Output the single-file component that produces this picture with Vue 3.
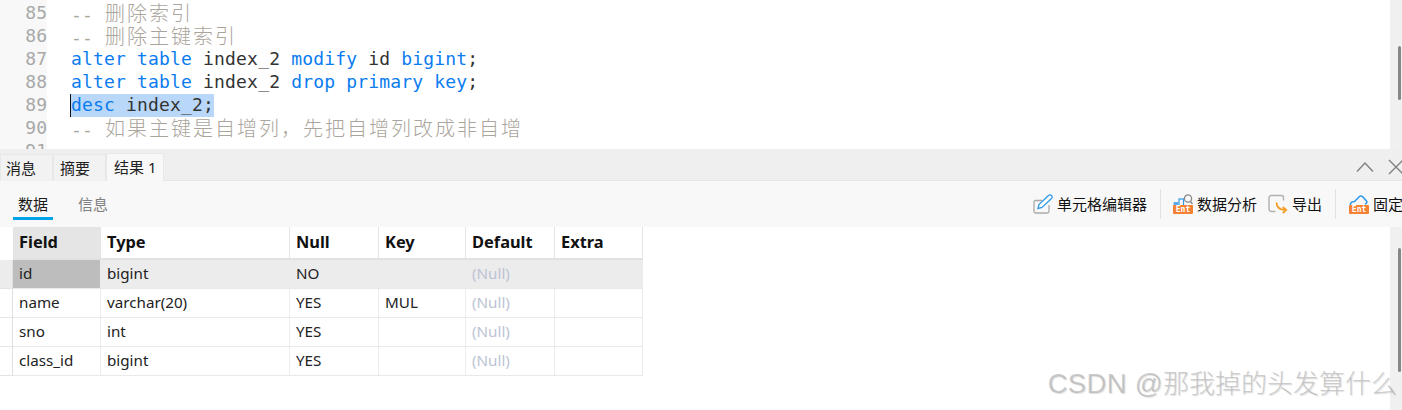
<script setup>
const lines = [
  { n: 85, parts: [['c', '-- '], ['z', '删除索引']] },
  { n: 86, parts: [['c', '-- '], ['z', '删除主键索引']] },
  { n: 87, parts: [['k', 'alter table '], ['t', 'index_2 '], ['k', 'modify '], ['t', 'id '], ['k', 'bigint'], ['t', ';']] },
  { n: 88, parts: [['k', 'alter table '], ['t', 'index_2 '], ['k', 'drop primary key'], ['t', ';']] },
  { n: 89, sel: true, parts: [['k', 'desc '], ['t', 'index_2;']] },
  { n: 90, parts: [['c', '-- '], ['z', '如果主键是自增列，先把自增列改成非自增']] },
  { n: 91, parts: [] }
]
const cols = ['Field', 'Type', 'Null', 'Key', 'Default', 'Extra']
const rows = [
  ['id', 'bigint', 'NO', ''],
  ['name', 'varchar(20)', 'YES', 'MUL'],
  ['sno', 'int', 'YES', ''],
  ['class_id', 'bigint', 'YES', '']
]
</script>

<template>
  <div class="app">
    <section class="editor">
      <div class="gutter">
        <div v-for="l in lines" :key="l.n" class="num">{{ l.n }}</div>
      </div>
      <div class="code">
        <div v-for="l in lines" :key="l.n" class="line">
          <span :class="{ sel: l.sel }"><span v-for="(p, i) in l.parts" :key="i" :class="p[0]">{{ p[1] }}</span></span>
        </div>
      </div>
      <div class="track"><div class="thumb thumb-top"></div></div>
    </section>

    <nav class="tabs">
      <div class="tab">消息</div>
      <div class="tab second">摘要</div>
      <div class="tab active">结果 1</div>
      <div class="win">
        <svg width="18" height="12" viewBox="0 0 18 12"><path d="M1 10.500 9 2l8 8.500" fill="none" stroke="#808080" stroke-width="1.400"/></svg>
        <svg width="16" height="16" viewBox="0 0 16 16"><path d="M1 1l14 14M15 1 1 15" fill="none" stroke="#808080" stroke-width="1.400"/></svg>
      </div>
    </nav>

    <div class="toolbar">
      <div class="sub on">数据</div>
      <div class="sub">信息</div>
      <div class="actions">
        <div class="act">
          <svg width="20" height="20" viewBox="0 0 20 20"><path d="M9 6.500H2.500A1.500 1.500 0 0 0 1 8v9.500A1.500 1.500 0 0 0 2.500 19h12a1.500 1.500 0 0 0 1.500-1.500V11" fill="none" stroke="#a9a9a9" stroke-width="1.300"/><path d="M5 14.500 6 10.500 15.500 1.500a1.500 1.500 0 0 1 3 3L9 13.500z" fill="#fff" stroke="#2f9be8" stroke-width="1.300"/></svg>
          <span>单元格编辑器</span>
        </div>
        <i class="sep sep1"></i>
        <div class="act">
          <span class="ico">
            <svg width="20" height="20" viewBox="0 0 20 20"><rect x="0.600" y="8" width="4.500" height="4" fill="#5aa9ea"/><rect x="6" y="5" width="4.500" height="7" fill="none" stroke="#2f9be8" stroke-width="1.200"/><circle cx="15" cy="4.500" r="3.600" fill="none" stroke="#8a8a8a" stroke-width="1.300"/><path d="M17.500 7.500l2 2.500" stroke="#8a8a8a" stroke-width="1.400"/></svg>
            <b class="ent">Ent</b>
          </span>
          <span>数据分析</span>
        </div>
        <div class="act a3">
          <svg width="20" height="20" viewBox="0 0 20 20"><path d="M13 1.500H3.500A2.500 2.500 0 0 0 1 4v11a2.500 2.500 0 0 0 2.500 2.500h4M12 1.500h1.500A2 2 0 0 1 15.500 3.500v3" fill="none" stroke="#b0b0b0" stroke-width="1.400"/><path d="M8.500 8.500c0 4.500 2 7.500 9.500 7.500M14.800 13l3.400 3-3.400 3" fill="none" stroke="#f39a1e" stroke-width="1.700"/></svg>
          <span>导出</span>
        </div>
        <i class="sep sep2"></i>
        <div class="act">
          <span class="ico">
            <svg width="20" height="20" viewBox="0 0 20 20"><path d="M1.500 11c-.500-2.500 1.500-3.500 4-3.500l5-5c1-1 2.500-.500 3.500.500l3.500 4c1 1.300 0 2.500-1.500 3" fill="none" stroke="#2f9be8" stroke-width="1.600"/></svg>
            <b class="ent">Ent</b>
          </span>
          <span>固定</span>
        </div>
      </div>
    </div>

    <section class="results">
      <div class="grid">
        <div class="rowhead"></div>
        <div v-for="(c, i) in cols" :key="c" class="cell head" :class="{ first: i === 0 }">{{ c }}</div>
        <template v-for="(r, ri) in rows" :key="ri">
          <div class="rowhead" :class="{ cur: ri === 0 }"></div>
          <div v-for="(v, ci) in r" :key="ci" class="cell" :class="{ cur: ri === 0, pick: ri === 0 && ci === 0 }">{{ v }}</div>
          <div class="cell null" :class="{ cur: ri === 0 }">(Null)</div>
          <div class="cell" :class="{ cur: ri === 0 }"></div>
        </template>
      </div>
      <div class="track track2"><div class="thumb thumb-bot"></div></div>
      <div class="mark"><span class="mark-latin">CSDN @</span>那我掉的头发算什么</div>
    </section>
  </div>
</template>

<style scoped>
.app { width: 1402px; height: 410px; overflow: hidden; background: #fff; display: flex; flex-direction: column; font-family: "Noto Sans", "Noto Sans CJK SC", sans-serif; }
.editor { height: 149px; flex: none; display: flex; overflow: hidden; background: #fff; }
.gutter { width: 47px; flex: none; background: #f8f8f8; padding: 1px 0 0 0; text-align: right; box-sizing: border-box; }
.num { width: 47px; height: 23px; font: 18px/23px "DejaVu Sans Mono", monospace; color: #a8a8a8; }
.code { flex: 1; padding: 2px 0 0 24px; }
.line { height: 23px; font: 18px/21px "DejaVu Sans Mono", "Noto Sans CJK SC", monospace; letter-spacing: .17px; white-space: pre; }
.sel { display: inline-block; height: 23px; background: #b9d7f9; box-shadow: -1px 0 0 #111; }
.k { color: #0a7cf0; }
.t { color: #333; }
.c { color: #aaa59c; }
.z { color: #aaa59c; font: 300 20px/21px "Noto Sans CJK SC", sans-serif; letter-spacing: 2px; margin-left: 1px; }
.track { width: 12px; flex: none; background: #f0f0f0; position: relative; }
.thumb { position: absolute; left: 8px; width: 3px; background: #868686; border-radius: 2px; }
.thumb-top { top: 46px; height: 54px; }
.tabs { height: 32px; flex: none; background: #efefef; display: flex; align-items: flex-end; border-bottom: 1px solid #e6e6e6; box-sizing: border-box; position: relative; font-size: 15px; color: #222; }
.tab { width: 53px; height: 27px; box-sizing: border-box; background: #f2f2f2; border: 1px solid #e8e8e8; border-bottom: 0; text-align: left; padding-left: 5px; line-height: 26px; margin-bottom: -1px; }
.tab.second { padding-left: 6px; }
.tab.active { width: 58px; height: 28px; background: #f8f8f8; padding-left: 7px; }
.win { margin-left: auto; height: 100%; display: flex; align-items: center; gap: 14px; position: relative; left: 2px; top: 2px; }
.toolbar { height: 46px; flex: none; background: #f8f8f8; display: flex; font-size: 15px; }
.sub { width: 40px; margin-left: 13px; text-align: center; color: #808080; line-height: 46px; height: 39px; box-sizing: border-box; }
.sub.on { color: #1a1a1a; border-bottom: 3px solid #00a2e8; margin-right: 15px; }
.sub + .sub { margin-left: 0; width: 50px; }
.actions { margin-left: auto; display: flex; align-items: center; height: 46px; color: #111; width: 369px; box-sizing: border-box; white-space: nowrap; overflow: hidden; }
.act { display: flex; align-items: center; gap: 4px; flex: none; }
.act > span:last-child { padding-bottom: 2px; }
.sep { width: 1px; height: 30px; background: #e2e2e2; flex: none; }
.sep1 { margin: 0 12px 0 13px; }
.a3 { margin-left: 11px; }
.sep2 { margin: 0 13px 0 13px; }
.ico { position: relative; width: 20px; height: 20px; display: block; }
.ico svg { display: block; }
.ent { position: absolute; left: 0; top: 11px; width: 20px; height: 9px; background: #f58132; color: #fff; font: 700 8px/9px "DejaVu Sans Mono", monospace; text-align: center; border-radius: 1px; }
.results { flex: 1; position: relative; display: flex; justify-content: space-between; background: #fff; min-height: 0; }
.grid { display: grid; grid-template-columns: 13px 88px 189px 89px 87px 89px 88px; grid-template-rows: 33px repeat(4, 29px); width: 643px; height: 149px; font-size: 15.200px; color: #222; }
.cell { border-right: 1px solid #ececec; border-bottom: 1px solid #e9e9e9; padding-left: 6px; line-height: 26px; white-space: nowrap; box-sizing: border-box; }
.head { font-weight: 700; font-size: 16.400px; color: #111; line-height: 29px; border-bottom: 2px solid #e2e2e2; border-right: 1px solid #e4e4e4; }
.head.first { background: #e5e5e5; }
.rowhead { border-bottom: 1px solid #e4e4e4; border-right: 1px solid #e0e0e0; box-sizing: border-box; }
.rowhead:first-child { border-bottom: 0; border-right: 0; }
.cur { background: #ececec; }
.pick { background: #bdbdbd; }
.null { color: #bcc3d4; }
.track2 { position: absolute; right: 0; top: 0; bottom: 0; }
.thumb-bot { top: 21px; height: 124px; }
.mark { position: absolute; right: 5px; top: 139px; font-size: 26px; line-height: 36px; color: rgba(165,165,165,.55); text-shadow: 1px 1px 1px rgba(0,0,0,.12); white-space: nowrap; font-weight: 300; font-family: "Liberation Sans", "Noto Sans CJK SC", sans-serif; }
.mark-latin { font-size: 27.500px; letter-spacing: .3px; }
</style>
